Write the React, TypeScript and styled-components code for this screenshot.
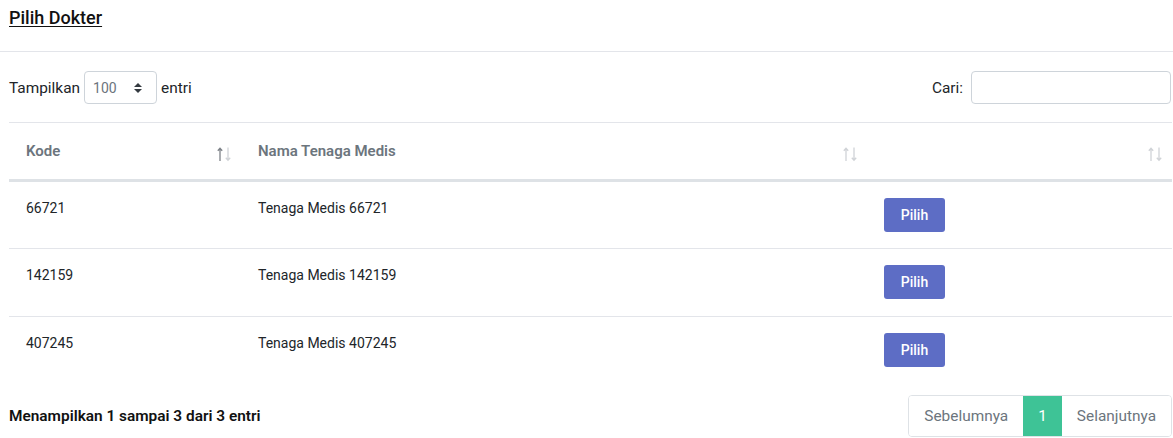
import styled, { createGlobalStyle } from "styled-components";

const GlobalStyle = createGlobalStyle`
  html, body {
    margin: 0;
    padding: 0;
    background: #fff;
    font-family: Roboto, "Liberation Sans", sans-serif;
    font-size: 15.4px;
    color: #212529;
  }
  * { box-sizing: border-box; }
`;

const doctors = [
  { kode: "66721", nama: "Tenaga Medis 66721" },
  { kode: "142159", nama: "Tenaga Medis 142159" },
  { kode: "407245", nama: "Tenaga Medis 407245" },
];

const S = {
  Page: styled.div`
    width: 1173px;
  `,
  Header: styled.div`
    height: 52px;
    padding: 7px 9px 0;
    border-bottom: 1px solid #e3e5ea;
  `,
  Title: styled.h5`
    margin: 0;
    font-size: 18px;
    font-weight: 500;
    line-height: 22px;
    text-decoration: underline;
    text-underline-offset: 2px;
    color: #111;
  `,
  Body: styled.div`
    padding: 0 1px 0 9px;
  `,
  Toolbar: styled.div`
    height: 70px;
    display: flex;
    align-items: center;
    justify-content: space-between;
    padding-top: 1px;
  `,
  Label: styled.label`
    display: flex;
    align-items: center;
    gap: 4px;
    color: #212529;
  `,
  Select: styled.div`
    width: 73px;
    height: 33px;
    border: 1px solid #ced4da;
    border-radius: 4px;
    display: flex;
    align-items: center;
    justify-content: space-between;
    padding: 0 13px 0 8px;
    color: #6c757d;
    font-size: 14px;
  `,
  SearchInput: styled.input`
    width: 200px;
    height: 33px;
    border: 1px solid #ced4da;
    border-radius: 4px;
    margin-left: 4px;
    margin-right: 1px;
    outline: none;
  `,
  Table: styled.table`
    width: 100%;
    border-collapse: collapse;
    table-layout: fixed;
    border-top: 1px solid #e3e5ea;
  `,
  Th: styled.th<{ $w?: number }>`
    width: ${(p) => (p.$w ? `${p.$w}px` : "auto")};
    height: 58px;
    padding: 0 8px 1px 17px;
    text-align: left;
    font-size: 15px;
    font-weight: 600;
    color: #6c757d;
    border-bottom: 3px solid #dee2e6;
  `,
  ThInner: styled.div`
    display: flex;
    align-items: center;
    justify-content: space-between;
  `,
  SortIcon: styled.svg`
    width: 16px;
    height: 16px;
    margin-top: 7px;
    margin-right: 1px;
  `,
  Tr: styled.tr`
    border-bottom: 1px solid #e3e5ea;
    &:last-child {
      border-bottom: none;
    }
  `,
  Td: styled.td`
    height: 68px;
    padding: 16px 17px 0;
    vertical-align: top;
    font-size: 14px;
    line-height: 20px;
  `,
  ButtonTd: styled.td`
    height: 68px;
    padding: 16px 17px 0;
    vertical-align: top;
  `,
  PickButton: styled.button`
    width: 61px;
    height: 34px;
    border: none;
    border-radius: 3px;
    background: #5d6dc5;
    color: #fff;
    font-family: inherit;
    font-size: 14px;
    font-weight: 500;
    cursor: pointer;
  `,
  Footer: styled.div`
    display: flex;
    align-items: center;
    justify-content: space-between;
    margin-top: 10px;
  `,
  Info: styled.div`
    font-size: 15.4px;
    font-weight: 600;
    color: #111;
  `,
  Pagination: styled.div`
    display: flex;
    height: 42px;
    border: 1px solid #dee2e6;
    border-radius: 4px;
    overflow: hidden;
  `,
  PageItem: styled.div<{ $active?: boolean }>`
    display: flex;
    align-items: center;
    padding: 0 15px;
    background: ${(p) => (p.$active ? "#3ec396" : "#fff")};
    color: ${(p) => (p.$active ? "#fff" : "#6c757d")};
  `,
};

function SortArrows({ active }: { active?: boolean }) {
  const on = active ? "#7d8288" : "#d0d3d7";
  const off = "#d0d3d7";
  return (
    <S.SortIcon viewBox="0 0 16 16" fill="none" strokeWidth="1.3">
      <path d="M4 15 V2.5 M1.8 4.8 L4 2.3 L6.2 4.8" stroke={on} />
      <path d="M12 1.5 V14 M9.8 11.7 L12 14.2 L14.2 11.7" stroke={off} />
    </S.SortIcon>
  );
}

export default function App() {
  return (
    <S.Page>
      <GlobalStyle />
      <S.Header>
        <S.Title>Pilih Dokter</S.Title>
      </S.Header>
      <S.Body>
        <S.Toolbar>
          <S.Label>
            Tampilkan
            <S.Select>
              <span>100</span>
              <svg width="10" height="12" viewBox="0 0 10 12">
                <path d="M5 1 L9 5 H1 Z M5 11 L9 7 H1 Z" fill="#343a40" />
              </svg>
            </S.Select>
            entri
          </S.Label>
          <S.Label>
            Cari:
            <S.SearchInput type="search" />
          </S.Label>
        </S.Toolbar>
        <S.Table>
          <thead>
            <tr>
              <S.Th $w={232}>
                <S.ThInner>
                  Kode
                  <SortArrows active />
                </S.ThInner>
              </S.Th>
              <S.Th $w={626}>
                <S.ThInner>
                  Nama Tenaga Medis
                  <SortArrows />
                </S.ThInner>
              </S.Th>
              <S.Th>
                <S.ThInner>
                  <span />
                  <SortArrows />
                </S.ThInner>
              </S.Th>
            </tr>
          </thead>
          <tbody>
            {doctors.map((d) => (
              <S.Tr key={d.kode}>
                <S.Td>{d.kode}</S.Td>
                <S.Td>{d.nama}</S.Td>
                <S.ButtonTd>
                  <S.PickButton>Pilih</S.PickButton>
                </S.ButtonTd>
              </S.Tr>
            ))}
          </tbody>
        </S.Table>
        <S.Footer>
          <S.Info>Menampilkan 1 sampai 3 dari 3 entri</S.Info>
          <S.Pagination>
            <S.PageItem>Sebelumnya</S.PageItem>
            <S.PageItem $active>1</S.PageItem>
            <S.PageItem>Selanjutnya</S.PageItem>
          </S.Pagination>
        </S.Footer>
      </S.Body>
    </S.Page>
  );
}
